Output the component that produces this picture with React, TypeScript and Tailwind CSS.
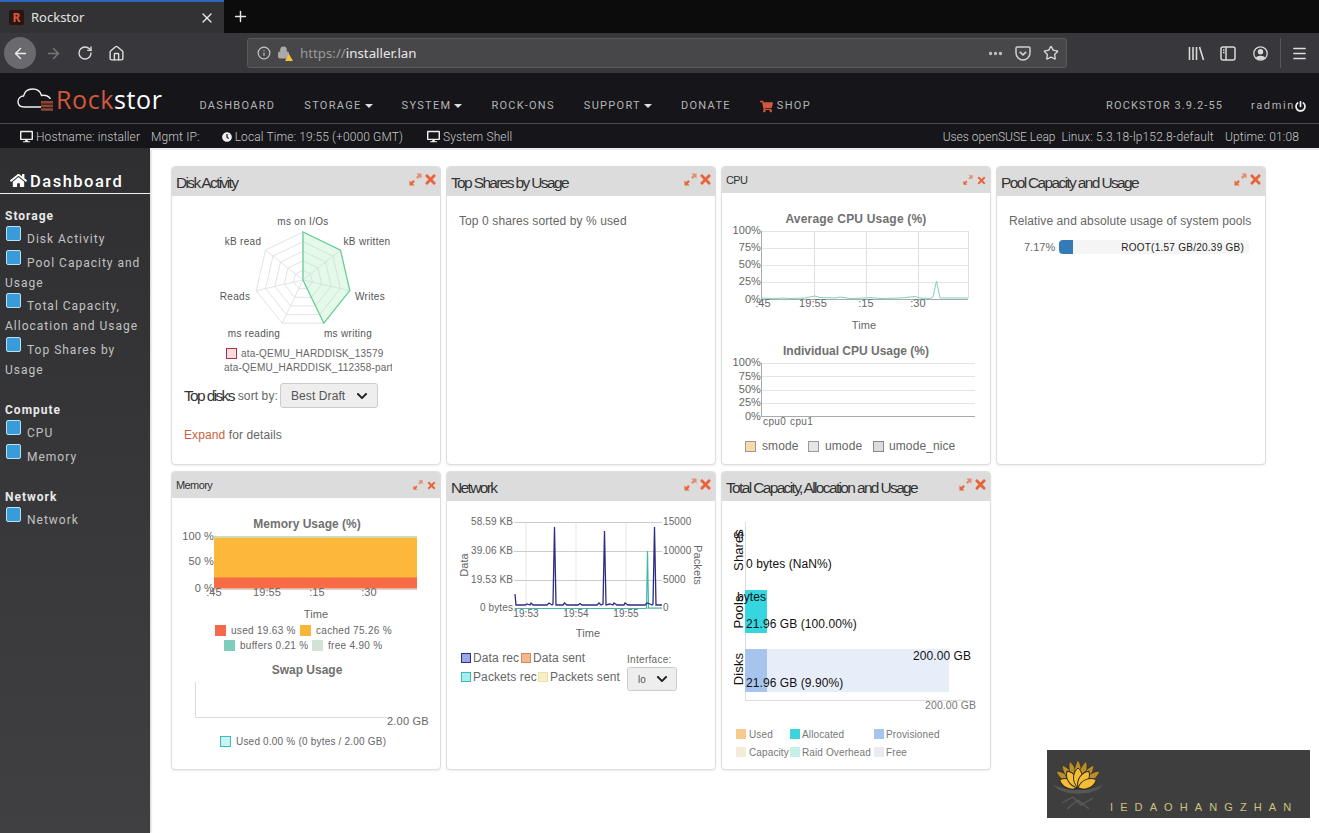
import React from "react";
import { ArrowLeft, ArrowRight, RotateCw, Home, Info, Lock, Ellipsis, Star, Menu, X, Plus } from "lucide-react";
import { FaHome, FaDesktop, FaClock, FaPowerOff, FaShoppingCart, FaTimes, FaChevronDown } from "react-icons/fa";

const Sans = "font-['Liberation_Sans',Arial,sans-serif]";

function ExpandIcon({ size }: { size: number }) {
  return (
    <svg width={size} height={size} viewBox="0 0 14 14">
      <path d="M8 0.5H13.5V6L11.6 4.2L9.4 6.4L7.6 4.6L9.8 2.4Z" fill="#e08d72" />
      <path d="M0.5 8V13.5H6L4.2 11.6L6.4 9.4L4.6 7.6L2.4 9.8Z" fill="#e56a3e" />
    </svg>
  );
}

function Card({ title, small, children }: { title: string; small?: boolean; children?: React.ReactNode }) {
  return (
    <div className="border border-[#dedede] rounded-[4px] bg-white shadow-[0_1px_2px_rgba(0,0,0,0.08)] overflow-hidden flex flex-col">
      <div className={`flex items-center justify-between shrink-0 bg-[#dcdcdc] pl-[4px] ${small ? "h-[26px] pr-[3px]" : "h-[29px] pr-[2px]"}`}>
        <span className={small ? "text-[11px] tracking-[-0.6px] text-[#333]" : "text-[15.5px] tracking-[-1.65px] text-[#333] mt-[2px]"}>{title}</span>
        <span className={`flex items-center ${small ? "gap-[3px]" : "gap-[1px] mb-[5px]"}`}>
          <ExpandIcon size={small ? 10 : 13} />
          <FaTimes className="text-[#e8623a]" size={small ? 11 : 15} />
        </span>
      </div>
      {children}
    </div>
  );
}

function Swatch({ bg, border, size = "w-[11px] h-[11px]" }: { bg: string; border: string; size?: string }) {
  return <span className={`inline-block shrink-0 border ${size}`} style={{ background: bg, borderColor: border }} />;
}

function ChartTitle({ children, className = "" }: { children: React.ReactNode; className?: string }) {
  return <div className={`h-[14px] leading-[14px] text-[12px] font-bold text-[#707070] text-center ${className}`}>{children}</div>;
}

function Side({ children, className = "" }: { children: React.ReactNode; className?: string }) {
  return (
    <div className={`leading-[20px] ${className}`}>
      <span className="inline-block w-[15px] h-[15px] mt-[1px] align-[2px] ml-[1px] mr-[6px] rounded-[2px] bg-[#3a9bd9] border-[1.5px] border-[#b4e4f6]" />
      {children}
    </div>
  );
}

function NavItem({ children, caret }: { children: React.ReactNode; caret?: boolean }) {
  return (
    <span className="flex items-center">
      {children}
      {caret && <span className="ml-[3px] mt-[-1px] border-x-[4px] border-x-transparent border-t-[4px] border-t-[#ddd]" />}
    </span>
  );
}

const Select = ({ label, className, labelClass, chevron = 11 }: { label: string; className: string; labelClass: string; chevron?: number }) => (
  <div className={`flex items-center justify-between border border-[#ccc] rounded-[3px] bg-[#eeeeee] text-[#555] ${className}`}>
    <span className={labelClass}>{label}</span>
    <FaChevronDown size={chevron} className="text-[#222]" />
  </div>
);

function Radar() {
  const cx = 303, cy = 280, r = 48;
  const pts = (rad: number[]) =>
    rad.map((v, k) => {
      const a = (k * 2 * Math.PI) / 7;
      return `${(cx + Math.sin(a) * v).toFixed(1)},${(cy - Math.cos(a) * v).toFixed(1)}`;
    }).join(" ");
  return (
    <svg width={268} height={150} viewBox="172 196 268 150" className="block">
      {[0.2, 0.4, 0.6, 0.8, 1].map((f) => (
        <polygon key={f} points={pts(Array(7).fill(r * f))} fill="none" stroke="#e0e0e0" strokeWidth="0.9" />
      ))}
      {[0, 1, 2, 3, 4, 5, 6].map((k) => {
        const a = (k * 2 * Math.PI) / 7;
        return <line key={k} x1={cx} y1={cy} x2={cx + Math.sin(a) * r} y2={cy - Math.cos(a) * r} stroke="#e0e0e0" strokeWidth="0.9" />;
      })}
      <polygon points={pts([48, 48, 48, 48, 0, 0, 0])} fill="#a9ecbc" fillOpacity="0.3" stroke="#63cf90" strokeWidth="1.2" />
      <g fontSize="10" fill="#555" fontFamily="Liberation Sans" letterSpacing="0.3" textAnchor="middle">
        <text x="303" y="224.5">ms on I/Os</text>
        <text x="243" y="244.5">kB read</text>
        <text x="367" y="244.5">kB written</text>
        <text x="235" y="300">Reads</text>
        <text x="370" y="300">Writes</text>
        <text x="254" y="337">ms reading</text>
        <text x="348" y="337">ms writing</text>
      </g>
    </svg>
  );
}

function AvgCpu() {
  return (
    <svg width={268} height={109} viewBox="722 226 268 109" className="block">
      {[231, 248, 265, 282].map((y) => <line key={y} x1="761" x2="968" y1={y + 0.5} y2={y + 0.5} stroke="#e4e4e4" />)}
      {[814, 866, 918, 968].map((x) => <line key={x} y1="231" y2="299" x1={x + 0.5} x2={x + 0.5} stroke="#dfdfe4" />)}
      <line x1="761.5" x2="761.5" y1="231" y2="300" stroke="#aaa" />
      <line x1="761" x2="968" y1="299.5" y2="299.5" stroke="#aaa" />
      <polyline fill="none" stroke="#7fd0c0" strokeWidth="1" points="761,298 775,298.5 782,298 790,298.5 805,298 810,297 815,296 820,297.5 835,298 840,297 850,298.5 865,298 870,297.5 880,298.5 900,298 915,296.5 920,298 930,298.5 933,297 936.5,281 940,298 950,298 968,298" />
      <g fontSize="11" fill="#666" fontFamily="Liberation Sans" textAnchor="end">
        <text x="761" y="234">100%</text>
        <text x="761" y="251">75%</text>
        <text x="761" y="268">50%</text>
        <text x="761" y="285">25%</text>
        <text x="761" y="303">0%</text>
      </g>
      <g fontSize="11" fill="#666" fontFamily="Liberation Sans" textAnchor="middle">
        <text x="763" y="307">:45</text>
        <text x="813" y="307">19:55</text>
        <text x="866" y="307">:15</text>
        <text x="918" y="307">:30</text>
        <text x="864" y="329">Time</text>
      </g>
    </svg>
  );
}

function IndCpu() {
  return (
    <svg width={268} height={72} viewBox="722 358 268 72" className="block">
      {[363, 376, 390, 403].map((y) => <line key={y} x1="761" x2="975" y1={y + 0.5} y2={y + 0.5} stroke="#e4e4e4" />)}
      <line x1="761.5" x2="761.5" y1="363" y2="416" stroke="#aaa" />
      <line x1="761" x2="975" y1="416.5" y2="416.5" stroke="#aaa" />
      <g fontSize="11" fill="#666" fontFamily="Liberation Sans" textAnchor="end">
        <text x="761" y="366">100%</text>
        <text x="761" y="380">75%</text>
        <text x="761" y="393">50%</text>
        <text x="761" y="406">25%</text>
        <text x="761" y="420">0%</text>
      </g>
      <g fontSize="10" fill="#666" fontFamily="Liberation Sans" letterSpacing="0.4">
        <text x="763" y="425">cpu0</text>
        <text x="790" y="425">cpu1</text>
      </g>
    </svg>
  );
}

function MemChart() {
  return (
    <svg width={268} height={92} viewBox="172 531 268 92" className="block">
      <rect x="214" y="536" width="203" height="2.5" fill="#cfdcb4" />
      <rect x="214" y="538" width="203" height="40" fill="#fdb73b" />
      <rect x="214" y="577.5" width="203" height="11" fill="#f76b45" />
      <rect x="214" y="588.5" width="203" height="1.2" fill="#dcb6a6" />
      <g fontSize="11" fill="#666" fontFamily="Liberation Sans" textAnchor="end">
        <text x="214" y="540">100 %</text>
        <text x="214" y="565">50 %</text>
        <text x="214" y="592">0 %</text>
      </g>
      <g fontSize="11" fill="#666" fontFamily="Liberation Sans" textAnchor="middle">
        <text x="214" y="596">:45</text>
        <text x="267" y="596">19:55</text>
        <text x="317" y="596">:15</text>
        <text x="369" y="596">:30</text>
        <text x="316" y="618">Time</text>
      </g>
    </svg>
  );
}

function SwapChart() {
  return (
    <svg width={268} height={52} viewBox="172 677 268 52" className="block">
      <line x1="195.5" x2="195.5" y1="682" y2="717" stroke="#ddd" />
      <line x1="195" x2="387" y1="717.5" y2="717.5" stroke="#ddd" />
      <text x="387" y="725" fontSize="11" fill="#666" fontFamily="Liberation Sans" letterSpacing="0.2">2.00 GB</text>
    </svg>
  );
}

function NetChart() {
  return (
    <svg width={268} height={140} viewBox="447 501 268 140" className="block">
      {[526, 576, 626].map((x) => <line key={x} y1="522" y2="608" x1={x} x2={x} stroke="#f3f3f3" strokeWidth="2" />)}
      {[522, 551, 580].map((y) => <line key={y} x1="514" x2="662" y1={y + 0.5} y2={y + 0.5} stroke="#ccc" />)}
      <line x1="514" x2="662" y1="608.5" y2="608.5" stroke="#ccc" />
      <polyline fill="none" stroke="#42b8a8" strokeWidth="1.2" points="515,608.5 645,608.5 646.5,608 647.5,551 648.5,608 650,608 662,608" />
      <polyline fill="none" stroke="#2d2d84" strokeWidth="1.3" points="515,594 516,605 525,605 527,604 530,605 531,603 533,605 547,605 549,603 552,605 553,604 554.5,527 556,605 563,605 564.5,603 567,605 578,605 580,603.5 582,605 597,605 599,603 601,605 603,604 604.5,531 606,605 610,604 613,605 614,603 617,605 624,605 625,603 628,605 645,605 647,603 650,604 652,605 653,604 654.5,527 656,605 662,605" />
      <g fontSize="10" fill="#666" fontFamily="Liberation Sans" textAnchor="end">
        <text x="513" y="524.5">58.59 KB</text>
        <text x="513" y="553.5">39.06 KB</text>
        <text x="513" y="582.5">19.53 KB</text>
        <text x="513" y="611">0 bytes</text>
      </g>
      <g fontSize="10" fill="#666" fontFamily="Liberation Sans">
        <text x="663" y="524.5">15000</text>
        <text x="663" y="553.5">10000</text>
        <text x="663" y="582.5">5000</text>
        <text x="663" y="611">0</text>
      </g>
      <g fontSize="10" fill="#666" fontFamily="Liberation Sans" textAnchor="middle">
        <text x="526" y="616.5">19:53</text>
        <text x="576" y="616.5">19:54</text>
        <text x="626" y="616.5">19:55</text>
      </g>
      <text x="588" y="637" fontSize="11" fill="#666" fontFamily="Liberation Sans" textAnchor="middle">Time</text>
      <text transform="translate(468,565) rotate(-90)" fontSize="11" fill="#666" fontFamily="Liberation Sans" textAnchor="middle">Data</text>
      <text transform="translate(694,565) rotate(90)" fontSize="11" fill="#666" fontFamily="Liberation Sans" textAnchor="middle">Packets</text>
    </svg>
  );
}

function TotalChart() {
  return (
    <svg width={268} height={211} viewBox="722 501 268 211" className="block">
      <line x1="745.5" x2="745.5" y1="522" y2="700" stroke="#ddd" />
      <line x1="745" x2="975" y1="700.5" y2="700.5" stroke="#ddd" />
      <rect x="745" y="590" width="22" height="43" fill="#36d6e0" />
      <rect x="745" y="649" width="204" height="43" fill="#e8eef9" />
      <rect x="745" y="649" width="22" height="43" fill="#a6c4ee" />
      <g fontSize="12" fill="#111" fontFamily="Liberation Sans" letterSpacing="0.08">
        <text x="746" y="568">0 bytes (NaN%)</text>
        <text x="737" y="601">bytes</text>
        <text x="746" y="628">21.96 GB (100.00%)</text>
        <text x="746" y="687">21.96 GB (9.90%)</text>
        <text x="913" y="660">200.00 GB</text>
      </g>
      <g fontSize="13" fill="#111" fontFamily="Liberation Sans" textAnchor="middle">
        <text transform="translate(743,550) rotate(-90)">Shares</text>
        <text transform="translate(743,535) rotate(-90)">$</text>
        <text transform="translate(743,612) rotate(-90)">Pools</text>
        <text transform="translate(743,669) rotate(-90)">Disks</text>
      </g>
      <text x="925" y="709" fontSize="10.5" fill="#777" fontFamily="Liberation Sans">200.00 GB</text>
    </svg>
  );
}

function Lotus() {
  const leaf = (len: number, w: number) => `M0 0C${-w} ${-len * 0.35} ${-w * 0.7} ${-len * 0.8} 0 ${-len}C${w * 0.7} ${-len * 0.8} ${w} ${-len * 0.35} 0 0Z`;
  return (
    <svg width={52} height={58} viewBox="0 0 52 58" className="shrink-0">
      <path d="M1 29C12 37 40 37 51 29C45 42 7 42 1 29Z" fill="#565656" />
      <path d="M10 48L21 42L29 50L41 43M15 54L26 45L37 54" fill="none" stroke="#595959" strokeWidth="1.4" />
      {[-54, -36, -18, 0, 18, 36, 54].map((a) => (
        <path key={a} d={leaf(27, 5.5)} transform={`translate(26 32) rotate(${a})`} fill="#b98d2c" stroke="#2c2a22" strokeWidth="0.6" />
      ))}
      {[-66, -33, 0, 33, 66].map((a) => (
        <path key={a} d={leaf(20, 7)} transform={`translate(26 33) rotate(${a})`} fill="#f4bd33" stroke="#2c2a22" strokeWidth="1" />
      ))}
    </svg>
  );
}

function Library() {
  return (
    <svg width="17" height="15" viewBox="0 0 17 15" fill="none" stroke="#d8d8d8" strokeWidth="1.6">
      <path d="M1.5 1V14M5 1V14M8.5 1V14M11.5 1L15.5 14" />
    </svg>
  );
}
function SidebarIco() {
  return (
    <svg width="16" height="15" viewBox="0 0 16 15" fill="none" stroke="#d8d8d8" strokeWidth="1.5">
      <rect x="1" y="1" width="14" height="13" rx="2" />
      <path d="M6 1V14M3 4H4.5M3 6.5H4.5" />
    </svg>
  );
}
function Account() {
  return (
    <svg width="15" height="15" viewBox="0 0 15 15">
      <circle cx="7.5" cy="7.5" r="6.7" fill="none" stroke="#d8d8d8" strokeWidth="1.3" />
      <circle cx="7.5" cy="5.8" r="2.7" fill="#d8d8d8" />
      <path d="M2.8 12C4 9 11 9 12.2 12C10 14.3 5 14.3 2.8 12Z" fill="#d8d8d8" />
    </svg>
  );
}
function Pocket() {
  return (
    <svg width="16" height="15" viewBox="0 0 16 15" fill="none" stroke="#d0d0d0" strokeWidth="1.5">
      <path d="M1 2.2C1 1.5 1.5 1 2.2 1H13.8C14.5 1 15 1.5 15 2.2V7C15 11 11.5 14 8 14C4.5 14 1 11 1 7Z" />
      <path d="M4.8 5.8L8 8.8L11.2 5.8" strokeWidth="1.7" />
    </svg>
  );
}
function LogoCloud() {
  return (
    <svg width="38" height="24" viewBox="0 0 38 24" className="shrink-0">
      <path d="M24 19H7C3 19 1 16.5 1 13.5C1 10.5 3.5 8 6.5 8C7.5 3.5 11 1 15.5 1C20 1 23.5 3.5 24.5 7.5C28 6.5 32 8 33.5 11" fill="none" stroke="#f0f0f0" strokeWidth="1.4" />
      <g fill="#8d4534">
        <rect x="24" y="13" width="12" height="2.6" />
        <rect x="24" y="16.6" width="12" height="2.6" />
        <rect x="24" y="20.2" width="12" height="2.6" />
      </g>
    </svg>
  );
}

export default function App() {
  return (
    <div className={`relative w-full h-screen overflow-hidden flex flex-col bg-white ${Sans}`}>
      {/* Browser tab strip */}
      <div className="h-[33px] shrink-0 bg-[#0c0c0d] flex items-stretch font-['Noto_Sans',sans-serif]">
        <div className="w-[224px] bg-[#323234] border-t-[2px] border-[#2f66bd] flex items-center pl-[9px] pr-[9px]">
          <span className="w-[15px] h-[15px] rounded-[2px] bg-[#2a1512] text-[#e0583a] text-[12px] font-bold leading-[15px] text-center">R</span>
          <span className="ml-[7px] text-[13px] text-[#e4e4e4]">Rockstor</span>
          <X size={16} strokeWidth={1.8} className="ml-auto text-[#eee]" />
        </div>
        <div className="flex items-center pl-[8px]">
          <Plus size={17} strokeWidth={2} className="text-[#e8e8e8]" />
        </div>
      </div>
      {/* Browser toolbar */}
      <div className="h-[40px] shrink-0 bg-[#38383c] flex items-center font-['Noto_Sans',sans-serif]">
        <span className="ml-[4px] w-[32px] h-[32px] rounded-full bg-[#6a6a6e] flex items-center justify-center">
          <ArrowLeft size={17} strokeWidth={2} className="text-[#ececec]" />
        </span>
        <ArrowRight size={17} strokeWidth={2} className="ml-[9px] text-[#77777a]" />
        <RotateCw size={16} strokeWidth={2} className="ml-[15px] text-[#dcdcdc]" />
        <Home size={17} strokeWidth={2} className="ml-[15px] text-[#dcdcdc]" />
        <div className="ml-[122px] w-[820px] h-[30px] rounded-[3px] bg-[#474749] border border-[#5b5b5d] flex items-center pl-[9px] pr-[7px]">
          <Info size={14} className="text-[#c8c8c8]" />
          <span className="relative ml-[6px] w-[15px] h-[15px]">
            <Lock size={13} className="text-[#aaa]" fill="#aaa" />
            <span className="absolute right-[-1px] bottom-[0px] w-0 h-0 border-x-[4px] border-x-transparent border-b-[7px] border-b-[#f2c43d]" />
          </span>
          <span className="ml-[8px] mt-[2px] text-[13.3px] text-[#9a9a9c]">https://<span className="text-[#e8e8e8]">installer.lan</span></span>
          <Ellipsis size={17} strokeWidth={2.6} className="ml-auto text-[#c4c4c4]" />
          <span className="ml-[11px] flex"><Pocket /></span>
          <Star size={16} strokeWidth={2} className="ml-[12px] text-[#d8d8d8]" />
        </div>
        <span className="ml-[121px] flex"><Library /></span>
        <span className="ml-[15px] flex"><SidebarIco /></span>
        <span className="ml-[17px] flex"><Account /></span>
        <span className="ml-[12px] w-px h-[30px] bg-[#55555a]" />
        <Menu size={17} strokeWidth={2} className="ml-[10px] text-[#dcdcdc]" />
      </div>
      {/* Rockstor nav */}
      <div className="h-[51px] shrink-0 bg-[#16161a] border-b border-[#4a4a4c] flex items-center font-['Roboto',sans-serif]">
        <span className="ml-[17px] mt-[4px] flex"><LogoCloud /></span>
        <span className="text-[25px] leading-none font-medium tracking-[0.6px] font-['Open_Sans',sans-serif] mt-[2px] ml-[1px]">
          <span className="text-[#d1583c]">Rock</span><span className="text-white">stor</span>
        </span>
        <div className="ml-[37px] flex items-center gap-[29px] text-[11px] tracking-[1.3px] text-[#b4b4b4] mt-[17px]">
          <NavItem>DASHBOARD</NavItem>
          <NavItem caret>STORAGE</NavItem>
          <NavItem caret>SYSTEM</NavItem>
          <NavItem>ROCK-ONS</NavItem>
          <NavItem caret>SUPPORT</NavItem>
          <NavItem>DONATE</NavItem>
          <NavItem><FaShoppingCart size={13} className="text-[#d1583c] mr-[4px]" />SHOP</NavItem>
        </div>
        <div className="ml-auto mr-[13px] flex items-center text-[11px] tracking-[1.1px] text-[#b4b4b4] mt-[17px]">
          <span>ROCKSTOR 3.9.2-55</span>
          <span className="ml-[28px] tracking-[1.65px]">radmin</span>
          <FaPowerOff size={11} className="ml-[0px] text-[#eee]" />
        </div>
      </div>
      {/* Status bar */}
      <div className="h-[24px] shrink-0 bg-[#16161a] flex items-center text-[12px] tracking-[0.12px] text-[#c8c8c8] font-['Roboto',sans-serif] font-light pt-[1px]">
        <FaDesktop size={13} className="ml-[20px] text-[#eee]" />
        <span className="ml-[3px]">Hostname: installer</span>
        <span className="ml-[11px]">Mgmt IP:</span>
        <FaClock size={10} className="ml-[22px] text-[#eee]" />
        <span className="ml-[3px]">Local Time: 19:55 (+0000 GMT)</span>
        <FaDesktop size={13} className="ml-[24px] text-[#eee]" />
        <span className="ml-[3px]">System Shell</span>
        <span className="ml-auto tracking-[0px]">Uses openSUSE Leap</span>
        <span className="ml-[6px] tracking-[0.15px]">Linux: 5.3.18-lp152.8-default</span>
        <span className="ml-[11px] mr-[20px]">Uptime: 01:08</span>
      </div>
      {/* Body */}
      <div className="flex-1 flex min-h-0">
        <aside className="w-[150px] shrink-0 bg-gradient-to-b from-[#2f2f31] to-[#404042] font-['Roboto',sans-serif] text-[12px] tracking-[1px] text-[#c2c2c2] shadow-[1px_0_2px_rgba(0,0,0,0.2)]">
          <div className="h-[46px] border-b-[1.5px] border-[#f0f0f0] flex items-end pl-[10px] text-white">
            <FaHome size={17} className="mb-[4px]" />
            <span className="ml-[3px] text-[16.5px] leading-[22px] font-medium tracking-[1.5px]">Dashboard</span>
          </div>
          <div className="pl-[5px] pr-[3px] pt-[14px]">
            <div className="font-bold text-[#e8e8e8] leading-[17px]">Storage</div>
            <Side>Disk Activity</Side>
            <Side>Pool Capacity and Usage</Side>
            <Side className="-mt-[1px]">Total Capacity, Allocation and Usage</Side>
            <Side>Top Shares by Usage</Side>
            <div className="font-bold text-[#e8e8e8] leading-[17px] mt-[22px]">Compute</div>
            <Side>CPU</Side>
            <Side>Memory</Side>
            <div className="font-bold text-[#e8e8e8] leading-[17px] mt-[22px]">Network</div>
            <Side>Network</Side>
          </div>
        </aside>
        <main className="flex-1 pl-[21px] pt-[16px] border-t-2 border-[#ececec] text-[12px] tracking-[0.1px] text-[#666]">
          <div className="grid grid-cols-[repeat(4,270px)] grid-rows-[299px_299px] gap-x-[5px] gap-y-[6px]">
            <Card title="Disk Activity">
              <Radar />
              <div className="h-[14px] flex items-center pl-[54px] text-[10px] tracking-[0.2px] text-[#666]">
                <Swatch bg="#fbdcdc" border="#a8324a" size="w-[11px] h-[11px]" />
                <span className="ml-[4px]">ata-QEMU_HARDDISK_13579</span>
              </div>
              <div className="h-[14px] mt-[1px] ml-[52px] w-[168px] overflow-hidden whitespace-nowrap text-[10px] leading-[14px] tracking-[0.2px] text-[#666]">ata-QEMU_HARDDISK_112358-part</div>
              <div className="mt-[8px] h-[25px] flex items-center pl-[12px]">
                <span className="text-[15.5px] tracking-[-1.65px] text-[#333]">Top disks</span>
                <span className="ml-[4px]">sort by:</span>
                <Select label="Best Draft" className="ml-[2px] w-[98px] h-[25px] pl-[10px] pr-[9px]" labelClass="text-[12px]" chevron={12} />
              </div>
              <div className="mt-[19px] h-[16px] leading-[16px] pl-[12px]">
                <span className="text-[#c9633f]">Expand</span> for details
              </div>
            </Card>
            <Card title="Top Shares by Usage">
              <div className="pl-[12px] mt-[18px] h-[14px] leading-[14px]">Top 0 shares sorted by % used</div>
            </Card>
            <Card title="CPU" small>
              <ChartTitle className="mt-[19px] tracking-[0.2px]">Average CPU Usage (%)</ChartTitle>
              <AvgCpu />
              <ChartTitle className="mt-[9px] tracking-[0px]">Individual CPU Usage (%)</ChartTitle>
              <IndCpu />
              <div className="mt-[9px] h-[14px] flex items-center pl-[23px]">
                <Swatch bg="#fbd9a8" border="#999" />
                <span className="ml-[6px] w-[46px]">smode</span>
                <Swatch bg="#e6e6e6" border="#999" />
                <span className="ml-[6px] w-[48px]">umode</span>
                <Swatch bg="#dcdcdc" border="#888" />
                <span className="ml-[5px]">umode_nice</span>
              </div>
            </Card>
            <Card title="Pool Capacity and Usage">
              <div className="pl-[12px] mt-[18px] h-[14px] leading-[14px]">Relative and absolute usage of system pools</div>
              <div className="mt-[11px] pl-[27px] flex items-center">
                <span className="w-[30px] text-[11px] tracking-[0px]">7.17%</span>
                <div className="ml-[5px] w-[190px] h-[14px] rounded-[4px] bg-[#f5f5f5] overflow-hidden flex justify-between items-center">
                  <span className="w-[14px] h-full bg-[#337ab7]" />
                  <span className="pr-[5px] text-[10px] tracking-[0.25px] text-[#222]">ROOT(1.57 GB/20.39 GB)</span>
                </div>
              </div>
            </Card>
            <Card title="Memory" small>
              <ChartTitle className="mt-[19px] ml-[2px] tracking-[0px]">Memory Usage (%)</ChartTitle>
              <MemChart />
              <div className="h-[15px] flex items-center pl-[43px] text-[10px] tracking-[0.3px] whitespace-nowrap">
                <Swatch bg="#f4694b" border="#f4694b" />
                <span className="ml-[5px] w-[69px] shrink-0">used 19.63 %</span>
                <Swatch bg="#f6b637" border="#f6b637" />
                <span className="ml-[5px]">cached 75.26 %</span>
              </div>
              <div className="h-[15px] flex items-center pl-[52px] text-[10px] tracking-[0.3px] whitespace-nowrap">
                <Swatch bg="#7fccbc" border="#7fccbc" />
                <span className="ml-[5px] w-[72px] shrink-0">buffers 0.21 %</span>
                <Swatch bg="#d2e2d4" border="#d2e2d4" />
                <span className="ml-[5px]">free 4.90 %</span>
              </div>
              <ChartTitle className="mt-[10px] ml-[2px] tracking-[0px]">Swap Usage</ChartTitle>
              <SwapChart />
              <div className="mt-[5px] h-[14px] flex items-center pl-[48px] text-[10px] tracking-[0.2px] whitespace-nowrap">
                <Swatch bg="#c8f4f4" border="#3bbcb8" />
                <span className="ml-[5px]">Used 0.00 % (0 bytes / 2.00 GB)</span>
              </div>
            </Card>
            <Card title="Network">
              <NetChart />
              <div className="mt-[7px] pl-[14px] flex">
                <div className="w-[166px] grid grid-cols-[60px_1fr] auto-rows-[19px] items-center whitespace-nowrap">
                  <span className="flex items-center gap-[2px]"><Swatch bg="#9aa8ea" border="#2f2f80" size="w-[10px] h-[10px]" />Data rec</span>
                  <span className="flex items-center gap-[2px]"><Swatch bg="#f7b78e" border="#d98a5a" size="w-[10px] h-[10px]" />Data sent</span>
                  <span className="flex items-center gap-[2px] w-[77px]"><Swatch bg="#a6eeee" border="#3bbcb8" size="w-[10px] h-[10px]" />Packets rec</span>
                  <span className="flex items-center gap-[2px] ml-[17px]"><Swatch bg="#f8efc6" border="#eadfa8" size="w-[10px] h-[10px]" />Packets sent</span>
                </div>
                <div className="flex flex-col">
                  <span className="mt-[5px] h-[14px] leading-[14px] text-[10px] tracking-[0.3px]">Interface:</span>
                  <Select label="lo" className="w-[50px] h-[24px] pl-[10px] pr-[8px]" labelClass="text-[10px]" chevron={12} />
                </div>
              </div>
            </Card>
            <Card title="Total Capacity, Allocation and Usage">
              <TotalChart />
              <div className="mt-[13px] ml-[14px] grid grid-cols-[54px_84px_1fr] auto-rows-[18px] items-center text-[10px] tracking-[0.12px] text-[#777] whitespace-nowrap">
                <span className="flex items-center gap-[3px]"><Swatch bg="#f6cb8e" border="#f6cb8e" size="w-[10px] h-[10px]" />Used</span>
                <span className="flex items-center gap-[2px]"><Swatch bg="#3ad4df" border="#3ad4df" size="w-[10px] h-[10px]" />Allocated</span>
                <span className="flex items-center gap-[2px]"><Swatch bg="#a6c4ee" border="#a6c4ee" size="w-[10px] h-[10px]" />Provisioned</span>
                <span className="flex items-center gap-[3px]"><Swatch bg="#f4ecd9" border="#f4ecd9" size="w-[10px] h-[10px]" />Capacity</span>
                <span className="flex items-center gap-[2px]"><Swatch bg="#c6efe8" border="#c6efe8" size="w-[10px] h-[10px]" />Raid Overhead</span>
                <span className="flex items-center gap-[2px]"><Swatch bg="#e9ebf0" border="#e9ebf0" size="w-[10px] h-[10px]" />Free</span>
              </div>
            </Card>
          </div>
        </main>
      </div>
      {/* Watermark overlay */}
      <div className="absolute right-[9px] bottom-[15px] w-[263px] h-[68px] bg-[#3e3e3e] flex items-start pl-[5px] pt-[5px]">
        <Lotus />
        <span className="absolute left-[63px] top-[49px] text-[11px] tracking-[7.1px] text-[#cfc27e]">IEDAOHANGZHAN</span>
      </div>
    </div>
  );
}
